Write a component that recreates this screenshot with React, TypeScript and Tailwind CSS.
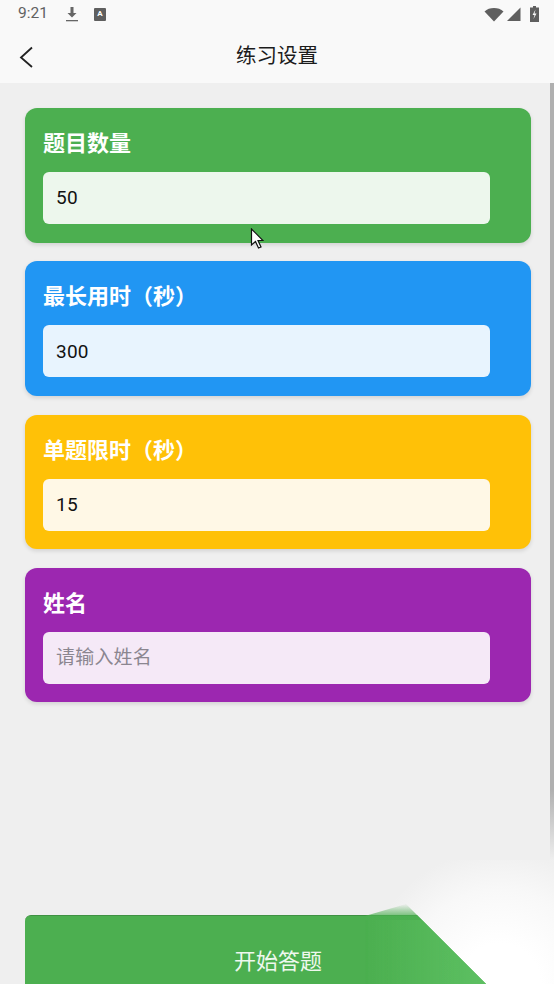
import React from 'react';

const cards = [
  { label: '题目数量', value: '50', placeholder: '', card: 'bg-[#4caf50]', input: 'bg-[#edf7ed]' },
  { label: '最长用时（秒）', value: '300', placeholder: '', card: 'bg-[#2196f3]', input: 'bg-[#e8f4fe]' },
  { label: '单题限时（秒）', value: '15', placeholder: '', card: 'bg-[#ffc107]', input: 'bg-[#fff8e6]' },
  { label: '姓名', value: '', placeholder: '请输入姓名', card: 'bg-[#9c27b0]', input: 'bg-[#f5e9f7]' },
];

function StatusBar() {
  return (
    <div className="flex h-[28px] items-center px-[18px] text-[#616161]">
      <span className="text-[15.5px] leading-none">9:21</span>
      <svg className="ml-[17px]" width="14" height="16" viewBox="0 0 14 16" fill="#666">
        <path d="M5.500 1h3v6h3L7 11.500 2.500 7h3z" />
        <rect x="1" y="14" width="12" height="1.300" />
      </svg>
      <div className="ml-[15px] flex h-[13px] w-[12px] items-center justify-center rounded-[1px] bg-[#5f5f5f] text-[8px] font-bold leading-none text-white">
        A
      </div>
      <div className="ml-auto flex items-center">
        <svg width="20" height="15" viewBox="0 0 20 15" fill="#5f5f5f">
          <path d="M0.500 4.500C3 2 6.300 1 10 1s7 1 9.500 3.500L10 14.500z" />
        </svg>
        <svg className="ml-[3px]" width="14" height="14" viewBox="0 0 14 14" fill="#5f5f5f">
          <path d="M13.500 0.500V14H0z" />
        </svg>
        <svg className="ml-[9px] mr-[-3px]" width="9" height="16" viewBox="0 0 9 16" fill="#5f5f5f">
          <path d="M3 0h3v1.500h3V16H0V1.500h3z" />
          <path d="M5.500 3.500 2.500 9h2l-1 4 3-5.500h-2z" fill="#f9f9f9" />
        </svg>
      </div>
    </div>
  );
}

function Header() {
  return (
    <div className="relative flex h-[55px] items-center justify-center">
      <svg className="absolute left-[19px] top-[18px]" width="15" height="22" viewBox="0 0 15 22" fill="none" stroke="#222" strokeWidth="1.800">
        <path d="M13 1.500 2 11.500 13 21" />
      </svg>
      <span className="pt-[1px] text-[20.500px] leading-none text-[#1c1c1c]">练习设置</span>
    </div>
  );
}

function Card({ item }: { item: (typeof cards)[number] }) {
  return (
    <div className={`flex h-[134.500px] flex-col rounded-[12px] px-[18px] pt-[22px] shadow-[0_2px_4px_rgba(0,0,0,0.12)] ${item.card}`}>
      <div className="text-[22px] font-bold leading-[28px] text-white">{item.label}</div>
      <div className={`mt-[14px] flex h-[52px] w-[447px] items-center rounded-[6px] px-[13px] pt-[1px] text-[19px] tracking-[0.2px] ${item.input}`}>
        {item.value ? <span className="text-[#111]">{item.value}</span> : <span className="text-[#8b8690]">{item.placeholder}</span>}
      </div>
    </div>
  );
}

export default function App() {
  return (
    <div className="relative h-[984px] w-[554px] overflow-hidden bg-[#f9f9f9] font-['Roboto','Noto_Sans_CJK_SC',sans-serif]">
      <StatusBar />
      <Header />
      <div className="relative h-[901px] bg-[#efefef] px-[25px] pt-[25px]">
        <div className="flex w-[506px] flex-col gap-[18.800px]">
          {cards.map(c => <Card key={c.label} item={c} />)}
        </div>
        <div className="mt-[213px] flex h-[92px] w-[506px] items-center justify-center rounded-[6px] border-t border-[#3f9143] bg-[#4caf50] text-[22px] text-[#eef8ee]">
          开始答题
        </div>
        {/* scrollbar, fades out where the page curl starts */}
        <div className="absolute right-0 top-0 h-[777px] w-[4.500px] bg-[linear-gradient(to_bottom,#b0b0b0_91%,#b0b0b000)]" />
      </div>

      {/* mouse cursor */}
      <svg className="absolute left-[250px] top-[228px]" width="14" height="22" viewBox="0 0 14 22">
        <path d="M1.500 1v16l4-3.500 3 6.500 2.500-1-3-6.500h5z" fill="#fff" stroke="#111" strokeWidth="1.200" />
      </svg>

      {/* page curl in the corner, coordinates are page px minus 340,860 */}
      <svg className="absolute left-[340px] top-[860px]" width="214" height="124" viewBox="0 0 214 124">
        <defs>
          <radialGradient id="sheet" gradientUnits="userSpaceOnUse" cx="160" cy="124" r="135">
            <stop offset="0" stopColor="#fff" />
            <stop offset="0.300" stopColor="#fff" />
            <stop offset="0.700" stopColor="#f8f8f8" />
            <stop offset="1" stopColor="#efefef" />
          </radialGradient>
          <linearGradient id="lite" gradientUnits="userSpaceOnUse" x1="25" y1="0" x2="146" y2="0">
            <stop offset="0" stopColor="#6fd075" stopOpacity="0" />
            <stop offset="1" stopColor="#6fd075" stopOpacity="0.500" />
          </linearGradient>
          <linearGradient id="fade" gradientUnits="userSpaceOnUse" x1="0" y1="44" x2="0" y2="60">
            <stop offset="0" stopColor="#4caf50" stopOpacity="0" />
            <stop offset="1" stopColor="#4caf50" />
          </linearGradient>
          <filter id="soft" x="-20%" y="-20%" width="140%" height="140%">
            <feGaussianBlur stdDeviation="0.700" />
          </filter>
        </defs>
        <path d="M0 0H214V124H146L66 44 25 55H0z" fill="url(#sheet)" />
        <path d="M25 56 66 44 146 124H25z" fill="url(#fade)" filter="url(#soft)" />
        <path d="M25 60H82L146 124H25z" fill="url(#lite)" filter="url(#soft)" />
      </svg>
    </div>
  );
}
